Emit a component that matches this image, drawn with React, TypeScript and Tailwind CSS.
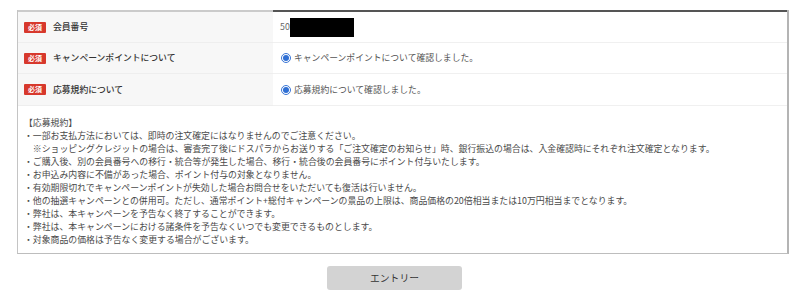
import React from "react";

const font = { fontFamily: '"Noto Sans CJK JP", "Noto Sans", sans-serif' };

function Badge() {
  return (
    <span className="inline-flex items-center justify-center w-[22px] h-[11px] bg-[#d7382c] text-white text-[7px] font-bold rounded-[1px] leading-none">
      必須
    </span>
  );
}

function Radio() {
  return (
    <span className="inline-flex items-center justify-center w-[10px] h-[10px] rounded-full border border-[#3a76d6] bg-white mr-[3px]">
      <span className="w-[6px] h-[6px] rounded-full bg-[#2f6fd4]" />
    </span>
  );
}

const terms = [
  "・一部お支払方法においては、即時の注文確定にはなりませんのでご注意ください。",
  "　※ショッピングクレジットの場合は、審査完了後にドスパラからお送りする「ご注文確定のお知らせ」時、銀行振込の場合は、入金確認時にそれぞれ注文確定となります。",
  "・ご購入後、別の会員番号への移行・統合等が発生した場合、移行・統合後の会員番号にポイント付与いたします。",
  "・お申込み内容に不備があった場合、ポイント付与の対象となりません。",
  "・有効期限切れでキャンペーンポイントが失効した場合お問合せをいただいても復活は行いません。",
  "・他の抽選キャンペーンとの併用可。ただし、通常ポイント+総付キャンペーンの景品の上限は、商品価格の20倍相当または10万円相当までとなります。",
  "・弊社は、本キャンペーンを予告なく終了することができます。",
  "・弊社は、本キャンペーンにおける諸条件を予告なくいつでも変更できるものとします。",
  "・対象商品の価格は予告なく変更する場合がございます。",
];

export default function App() {
  return (
    <div className="w-[801px] h-[295px] bg-white pt-[10px]" style={font}>
      <div className="ml-[17px] w-[772px] border-l border-l-[#c4c4c4] border-r-2 border-r-[#b4b4b4] border-b border-b-[#bdbdbd]">
        <div className="grid grid-cols-[255px_1fr]">
          {/* row 1 */}
          <div className="h-[33px] bg-[#f7f7f7] border-t-2 border-t-[#cbcbcb] border-b border-b-[#eeeeee] flex items-center pl-[6px] gap-[7px]">
            <Badge />
            <span className="text-[8.8px] font-medium text-[#333]">会員番号</span>
          </div>
          <div className="h-[33px] border-t-2 border-t-[#555] border-b border-b-[#f0f0f0] flex items-center pl-[7px]">
            <span className="text-[8.8px] text-[#666]">50</span>
            <span className="w-[64px] h-[19px] bg-black" />
          </div>
          {/* row 2 */}
          <div className="h-[31px] bg-[#f7f7f7] border-b border-b-[#eeeeee] flex items-center pl-[6px] gap-[7px]">
            <Badge />
            <span className="text-[8.8px] font-medium text-[#333]">キャンペーンポイントについて</span>
          </div>
          <div className="h-[31px] border-b border-b-[#f0f0f0] flex items-center pl-[8px]">
            <Radio />
            <span className="text-[8.8px] text-[#555]">キャンペーンポイントについて確認しました。</span>
          </div>
          {/* row 3 */}
          <div className="h-[32px] bg-[#f7f7f7] border-b border-b-[#eeeeee] flex items-center pl-[6px] gap-[7px]">
            <Badge />
            <span className="text-[8.8px] font-medium text-[#333]">応募規約について</span>
          </div>
          <div className="h-[32px] border-b border-b-[#f0f0f0] flex items-center pl-[8px]">
            <Radio />
            <span className="text-[8.8px] text-[#555]">応募規約について確認しました。</span>
          </div>
        </div>
        <div className="pl-[6px] pt-[10px] pb-[7px] text-[8.9px] leading-[13px] text-[#4a4a4a]">
          <p>【応募規約】</p>
          {terms.map((t, i) => (
            <p key={i} className="whitespace-nowrap">{t}</p>
          ))}
        </div>
      </div>
      <div className="pl-[327px] pt-[12px]">
        <button className="w-[135px] h-[24px] bg-[#d3d3d3] rounded-[3px] text-[9.8px] text-[#333] flex items-center justify-center">
          エントリー
        </button>
      </div>
    </div>
  );
}
